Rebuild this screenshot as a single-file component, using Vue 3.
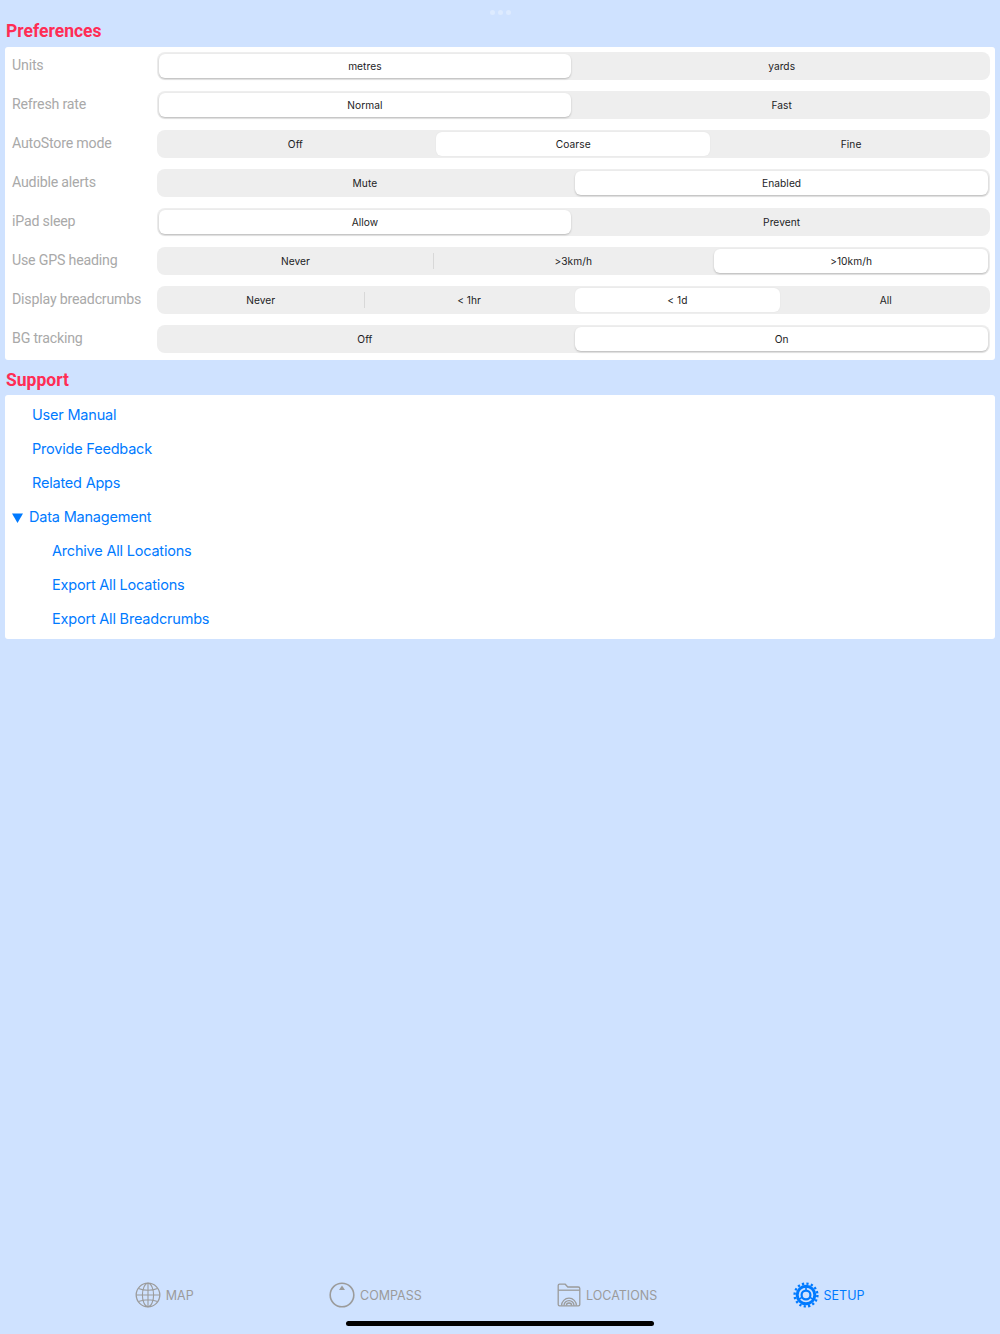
<template>
  <div class="page">
    <div class="dots"><i></i><i></i><i></i></div>

    <main class="content">
      <h2 class="heading first">Preferences</h2>
      <section class="card prefs">
        <div v-for="row in prefs" :key="row.label" class="row">
          <span class="label">{{ row.label }}</span>
          <div class="segmented">
            <div
              v-for="(opt, i) in row.options"
              :key="opt"
              class="seg"
              :class="{
                on: i === row.selected,
                raised: row.selected === 0 || row.selected === row.options.length - 1,
                divided: row.dividers && row.dividers.includes(i)
              }"
            >
              {{ opt }}
            </div>
          </div>
        </div>
      </section>

      <h2 class="heading">Support</h2>
      <section class="card support">
        <a class="link">User Manual</a>
        <a class="link">Provide Feedback</a>
        <a class="link">Related Apps</a>
        <a class="link group">
          <svg class="caret" width="11" height="10" viewBox="0 0 11 10"><path d="M0 0.5h11L5.5 10z" fill="#007aff" /></svg>
          Data Management
        </a>
        <a class="link sub">Archive All Locations</a>
        <a class="link sub">Export All Locations</a>
        <a class="link sub">Export All Breadcrumbs</a>
      </section>
    </main>

    <nav class="tabbar">
      <div class="tab">
        <svg width="26" height="26" viewBox="0 0 26 26" fill="none" stroke="#9b9b9b" stroke-width="1.1">
          <circle cx="13" cy="13" r="11.8" stroke-width="1.3" />
          <ellipse cx="13" cy="13" rx="5.6" ry="11.8" />
          <path d="M13 1.2v23.6M1.2 13h23.6M3.4 6.4q9.6 3.6 19.2 0M3.4 19.6q9.6-3.6 19.2 0" />
        </svg>
        <span>MAP</span>
      </div>
      <div class="tab">
        <svg width="26" height="26" viewBox="0 0 26 26" fill="none">
          <circle cx="13" cy="13" r="11.8" stroke="#9b9b9b" stroke-width="1.6" />
          <path d="M13 3.4l3 4.6h-6z" fill="#9b9b9b" />
        </svg>
        <span>COMPASS</span>
      </div>
      <div class="tab">
        <svg width="24" height="24" viewBox="0 0 24 24" fill="none" stroke="#9b9b9b" stroke-width="1.3">
          <path d="M1.2 21.6V2.6q0-1.4 1.4-1.4h5.6l2.6 2.8h10.4q1.6 0 1.6 1.6v15.8q0 1.4-1.4 1.4H2.6q-1.4 0-1.4-1.4z" />
          <path d="M1.2 7.2h21.6" />
          <path d="M4.6 22.6a7.4 7.4 0 0 1 14.8 0M7 22.6a5 5 0 0 1 10 0M9.4 22.6a2.6 2.6 0 0 1 5.2 0" />
        </svg>
        <span>LOCATIONS</span>
      </div>
      <div class="tab active">
        <svg width="26" height="26" viewBox="0 0 26 26" fill="none" stroke="#007aff">
          <circle cx="13" cy="13" r="11.4" stroke-width="2.4" stroke-dasharray="2.24 2.24" />
          <circle cx="13" cy="13" r="8.8" stroke-width="3" />
          <circle cx="13" cy="13" r="4.4" stroke-width="2.2" />
          <path d="M13 3v6M4.6 18l4.4-2.6M21.4 18L17 15.4" stroke-width="1.6" />
        </svg>
        <span>SETUP</span>
      </div>
    </nav>

    <div class="home"></div>
  </div>
</template>

<script setup>
const prefs = [
  { label: 'Units', options: ['metres', 'yards'], selected: 0 },
  { label: 'Refresh rate', options: ['Normal', 'Fast'], selected: 0 },
  { label: 'AutoStore mode', options: ['Off', 'Coarse', 'Fine'], selected: 1 },
  { label: 'Audible alerts', options: ['Mute', 'Enabled'], selected: 1 },
  { label: 'iPad sleep', options: ['Allow', 'Prevent'], selected: 0 },
  { label: 'Use GPS heading', options: ['Never', '>3km/h', '>10km/h'], selected: 2, dividers: [0] },
  { label: 'Display breadcrumbs', options: ['Never', '< 1hr', '< 1d', 'All'], selected: 2, dividers: [0] },
  { label: 'BG tracking', options: ['Off', 'On'], selected: 1 }
]
</script>

<style>
html,
body {
  margin: 0;
  background: #cfe2ff;
}
</style>

<style scoped>
.page {
  position: relative;
  display: flex;
  flex-direction: column;
  height: 1334px;
  overflow: hidden;
  background: #cfe2ff;
  font-family: Inter, "Liberation Sans", sans-serif;
}

.dots {
  position: absolute;
  top: 10px;
  left: 490px;
  display: flex;
  gap: 3px;
}

.dots i {
  width: 5px;
  height: 5px;
  border-radius: 50%;
  background: rgba(255, 255, 255, 0.3);
}

.content {
  flex: 1;
  padding: 21px 5px 0;
}

.heading {
  margin: 0;
  height: 20px;
  padding-left: 1px;
  font-family: Roboto, "Liberation Sans", sans-serif;
  font-size: 17.5px;
  line-height: 20px;
  font-weight: 700;
  color: #ff2d55;
}

.card {
  background: #fff;
  border-radius: 3px;
}

.prefs {
  display: flex;
  flex-direction: column;
  gap: 11px;
  margin: 6px 0 10px;
  padding: 5px 5px 7px 7px;
}

.row {
  display: flex;
  align-items: center;
  height: 28px;
}

.label {
  width: 144.5px;
  flex: none;
  padding-bottom: 2px;
  font-family: Roboto, "Liberation Sans", sans-serif;
  font-size: 14.2px;
  letter-spacing: -0.2px;
  color: #a9a9a9;
  white-space: nowrap;
}

.segmented {
  flex: 1;
  display: flex;
  gap: 4px;
  height: 28px;
  box-sizing: border-box;
  padding: 0 2px;
  border-radius: 8px;
  background: #eeeeee;
}

.seg {
  position: relative;
  flex: 1 1 0;
  display: flex;
  align-items: center;
  justify-content: center;
  isolation: isolate;
  font-size: 10.2px;
  letter-spacing: 0.05px;
  color: #1c1c1e;
}

.seg.on::before {
  content: "";
  position: absolute;
  inset: 2px 0;
  border-radius: 6px;
  background: #fff;
  box-shadow: 0 0 2px rgba(0, 0, 0, 0.06);
  z-index: -1;
}

.seg.on.raised::before {
  box-shadow: 0 1px 2px rgba(0, 0, 0, 0.22);
}

.seg.divided::after {
  content: "";
  position: absolute;
  top: 6px;
  bottom: 6px;
  right: -2px;
  width: 1px;
  background: #d8d8d8;
}

.support {
  display: flex;
  flex-direction: column;
  margin-top: 5px;
  padding: 2px 0 3.7px;
}

.link {
  display: flex;
  align-items: center;
  gap: 6px;
  height: 34.1px;
  padding-left: 27px;
  font-size: 14.5px;
  letter-spacing: -0.2px;
  color: #007aff;
}

.link.group {
  padding-left: 7px;
}

.link.sub {
  padding-left: 47px;
}

.caret {
  margin-top: 3px;
}

.tabbar {
  display: flex;
  justify-content: space-evenly;
  align-items: center;
  height: 50px;
  margin: 0 0 14px -0.6px;
  padding-right: 0.2px;
}

.tab {
  display: flex;
  align-items: center;
  gap: 5px;
  font-size: 12.5px;
  color: #9b9b9b;
}

.tab.active {
  color: #007aff;
}

.home {
  position: absolute;
  left: 346px;
  bottom: 8px;
  width: 308px;
  height: 5px;
  border-radius: 3px;
  background: #000;
}
</style>
